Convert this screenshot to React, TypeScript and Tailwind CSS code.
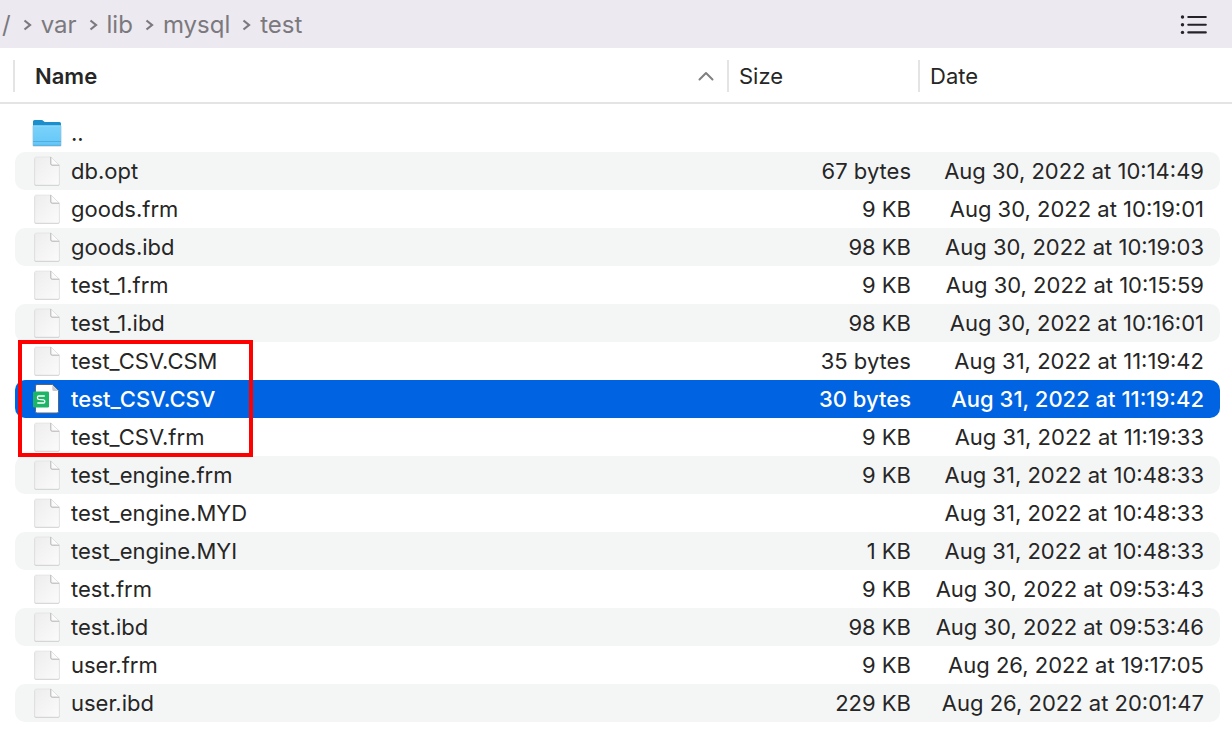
import { useState } from "react";
import clsx from "clsx";

type Entry = {
  name: string;
  size: string;
  date: string;
  kind: "folder" | "file" | "sheet";
};

const path = ["var", "lib", "mysql", "test"];

const entries: Entry[] = [
  { name: "..", size: "", date: "", kind: "folder" },
  { name: "db.opt", size: "67 bytes", date: "Aug 30, 2022 at 10:14:49", kind: "file" },
  { name: "goods.frm", size: "9 KB", date: "Aug 30, 2022 at 10:19:01", kind: "file" },
  { name: "goods.ibd", size: "98 KB", date: "Aug 30, 2022 at 10:19:03", kind: "file" },
  { name: "test_1.frm", size: "9 KB", date: "Aug 30, 2022 at 10:15:59", kind: "file" },
  { name: "test_1.ibd", size: "98 KB", date: "Aug 30, 2022 at 10:16:01", kind: "file" },
  { name: "test_CSV.CSM", size: "35 bytes", date: "Aug 31, 2022 at 11:19:42", kind: "file" },
  { name: "test_CSV.CSV", size: "30 bytes", date: "Aug 31, 2022 at 11:19:42", kind: "sheet" },
  { name: "test_CSV.frm", size: "9 KB", date: "Aug 31, 2022 at 11:19:33", kind: "file" },
  { name: "test_engine.frm", size: "9 KB", date: "Aug 31, 2022 at 10:48:33", kind: "file" },
  { name: "test_engine.MYD", size: "", date: "Aug 31, 2022 at 10:48:33", kind: "file" },
  { name: "test_engine.MYI", size: "1 KB", date: "Aug 31, 2022 at 10:48:33", kind: "file" },
  { name: "test.frm", size: "9 KB", date: "Aug 30, 2022 at 09:53:43", kind: "file" },
  { name: "test.ibd", size: "98 KB", date: "Aug 30, 2022 at 09:53:46", kind: "file" },
  { name: "user.frm", size: "9 KB", date: "Aug 26, 2022 at 19:17:05", kind: "file" },
  { name: "user.ibd", size: "229 KB", date: "Aug 26, 2022 at 20:01:47", kind: "file" },
];

function FolderIcon() {
  return (
    <svg width="32" height="32" viewBox="0 0 32 32" aria-hidden="true">
      <defs>
        <linearGradient id="folder-front" x1="0" y1="0" x2="0" y2="1">
          <stop offset="0" stopColor="#7ad2fb" />
          <stop offset="1" stopColor="#66c6f7" />
        </linearGradient>
      </defs>
      <rect x="1.5" y="8" width="29" height="21.6" rx="1.5" fill="#7f97a3" opacity=".5" />
      <path d="M2 4.500Q2 3 3.500 3H10.500q1.200 0 2 .9l.6.5q.6.600 1.500.6H28.500Q30 5 30 6.500V12H2z" fill="#1b8fcb" />
      <path d="M2 9.500Q2 8.500 3.200 8.500H28.800Q30 8.500 30 9.500V27.300Q30 28.800 28.500 28.800h-25Q2 28.800 2 27.300z" fill="url(#folder-front)" />
      <path d="M2 8.900h28" stroke="#a2e0fd" strokeWidth=".8" />
      <path d="M2 24.500h28M2 28.300h28" stroke="#48a9dc" strokeWidth=".8" />
    </svg>
  );
}

function FileIcon() {
  return (
    <svg width="32" height="32" viewBox="0 0 32 32" aria-hidden="true">
      <defs>
        <linearGradient id="page-fill" x1="0" y1="0" x2="1" y2="1">
          <stop offset="0" stopColor="#ededed" />
          <stop offset="1" stopColor="#fbfbfb" />
        </linearGradient>
        <linearGradient id="page-curl" x1="0" y1="1" x2="1" y2="0">
          <stop offset="0" stopColor="#f4f4f4" />
          <stop offset=".5" stopColor="#ffffff" />
        </linearGradient>
      </defs>
      <path d="M4.500 3H20l8.500 8V29.200q0 1.600-1.600 1.600H5.100q-1.600 0-1.600-1.600V4q0-1 1-1z" fill="#bdbdbd" opacity=".8" />
      <path d="M5.200 2H19.800L28.300 10.200V28.500Q28.300 30 26.800 30H5.200Q3.700 30 3.700 28.500V3.500Q3.700 2 5.200 2z" fill="url(#page-fill)" stroke="#dadada" strokeWidth=".5" />
      <path d="M19.800 2v6.900q0 1.300 1.300 1.300h7.200z" fill="url(#page-curl)" />
      <path d="M19.800 2v6.900q0 1.300 1.300 1.300h7.200" fill="none" stroke="#b3b3b3" strokeWidth="1" />
      <path d="M19.800 2l8.500 8.200" fill="none" stroke="#d4d4d4" strokeWidth=".6" />
    </svg>
  );
}

function SheetIcon() {
  return (
    <svg width="32" height="32" viewBox="0 0 32 32" aria-hidden="true">
      <path d="M6 1.500H21.500L27.500 7.500V28.500Q27.500 30 26 30H6Q4.500 30 4.500 28.500V3Q4.500 1.500 6 1.500z" fill="#fff" stroke="#536783" strokeWidth="1" />
      <path d="M21.300 2l6 6h-4.500q-1.500 0-1.500-1.500z" fill="#c7c9cd" />
      <rect x="2" y="8.500" width="16" height="16" rx="1.200" fill="#1cb567" />
      <path d="M13.800 13H7.800Q6.500 13 6.500 14.200V14.900Q6.500 16.100 7.800 16.300L12.500 16.800Q13.800 17 13.800 18.100V18.800Q13.800 20 12.500 20H6.300" fill="none" stroke="#fff" strokeWidth="1.300" />
    </svg>
  );
}

function Crumb({ label }: { label: string }) {
  return (
    <li className="flex items-center">
      <svg className="mr-2 ml-3" width="10" height="12" viewBox="0 0 10 12" aria-hidden="true">
        <path d="M1.500 1.500 7 6 1.500 10.500" fill="none" stroke="#7b797d" strokeWidth="2.200" />
      </svg>
      <a href="#">{label}</a>
    </li>
  );
}

export default function App() {
  const [selected, setSelected] = useState("test_CSV.CSV");

  return (
    <main className="min-h-screen bg-white font-['Inter',sans-serif] text-[22px] leading-[38px] text-[#262626]">
      <header className="flex h-12 items-center justify-between bg-[#ece9f0] pt-0.5 pr-6 pl-0.5">
        <nav aria-label="Path" className="text-2xl text-[#7b797d]">
          <ol className="flex items-center">
            <li><a href="#">/</a></li>
            {path.map((label) => <Crumb key={label} label={label} />)}
          </ol>
        </nav>
        <button type="button" aria-label="List view">
          <svg width="28" height="20" viewBox="0 0 28 20" aria-hidden="true">
            <g fill="#252329">
              <circle cx="2.500" cy="2" r="1.700" />
              <circle cx="2.500" cy="9.700" r="1.700" />
              <circle cx="2.500" cy="17.400" r="1.700" />
            </g>
            <path d="M8.300 2h17.500M8.300 9.700h17.500M8.300 17.400h17.500" stroke="#252329" strokeWidth="2.100" strokeLinecap="round" />
          </svg>
        </button>
      </header>

      <table className="block w-full">
        <thead className="block border-b-2 border-[#e4e4e4]">
          <tr className="grid grid-cols-[1fr_191px_314px] pt-3 pb-2.5 pl-[13px] text-left leading-8">
            <th scope="col" aria-sort="ascending" className="flex h-8 items-center justify-between border-l-2 border-[#e4e4e4] pr-3 pl-5 font-semibold">
              Name
              <svg width="18" height="12" viewBox="0 0 18 12" aria-hidden="true">
                <path d="M2.500 9.500 9 3l6.500 6.500" fill="none" stroke="#808080" strokeWidth="2" strokeLinecap="round" strokeLinejoin="round" />
              </svg>
            </th>
            <th scope="col" className="h-8 border-l-2 border-[#e4e4e4] pl-2.5 font-normal">Size</th>
            <th scope="col" className="h-8 border-l-2 border-[#e4e4e4] pl-2.5 font-normal">Date</th>
          </tr>
        </thead>
        <tbody className="block py-2.5 pr-3 pl-[15px]">
          {entries.map((entry, index) => (
            <tr
              key={entry.name}
              aria-selected={entry.name === selected}
              onClick={() => setSelected(entry.name)}
              className={clsx(
                "relative grid h-[38px] grid-cols-[1fr_184px_309px] rounded-[10px] whitespace-nowrap",
                entry.name === selected ? "bg-[#0063e1] font-medium text-white" : index % 2 === 1 && "bg-[#f4f5f5]",
              )}
            >
              <td className="flex items-center gap-2 pl-4">
                {entry.kind === "folder" ? <FolderIcon /> : entry.kind === "sheet" ? <SheetIcon /> : <FileIcon />}
                <span>{entry.name}</span>
                {entry.name === "test_CSV.CSM" && (
                  <span className="pointer-events-none absolute -top-0.5 left-[3px] z-10 h-[117px] w-[235px] border-4 border-[#fe0000]" />
                )}
              </td>
              <td className="text-right">{entry.size}</td>
              <td className="pr-4 text-right">{entry.date}</td>
            </tr>
          ))}
        </tbody>
      </table>
    </main>
  );
}
